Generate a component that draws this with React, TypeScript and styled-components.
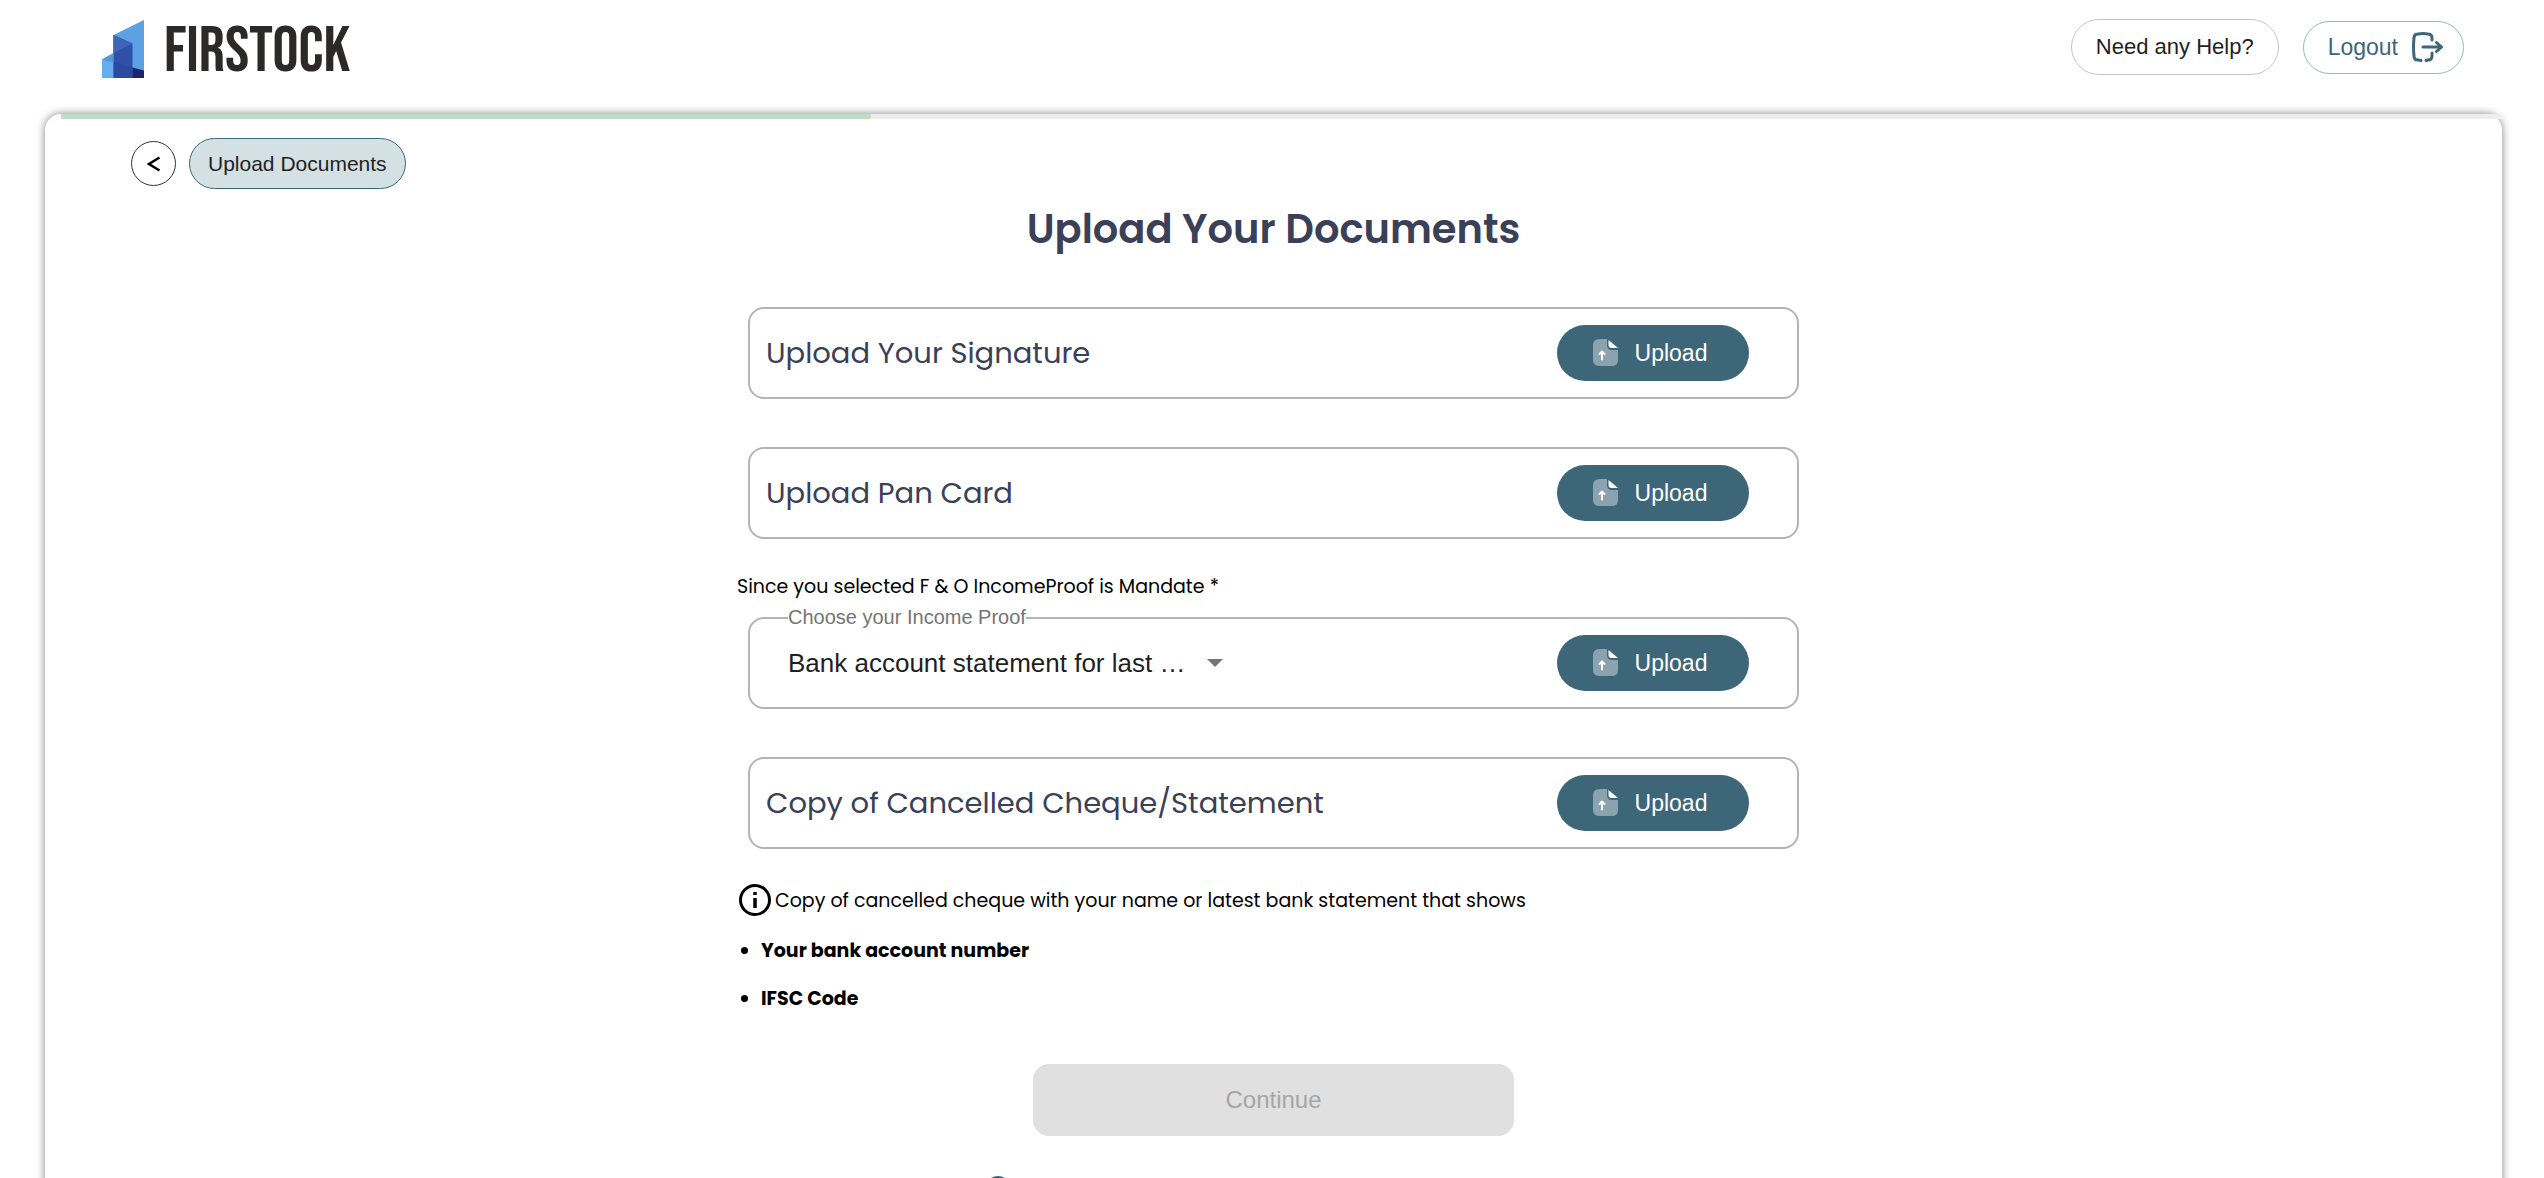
import React, { useState } from "react";
import styled, { createGlobalStyle } from "styled-components";

const UI = `"Liberation Sans", Arial, sans-serif`;
const BODY = `Poppins, Inter, "Open Sans", sans-serif`;
const TEAL = "#3d6678";
const INK = "#3a4058";

const GlobalStyle = createGlobalStyle`
  *, *::before, *::after { box-sizing: border-box; }
  body { margin: 0; background: #ffffff; color: #000000; font-family: ${BODY}; }
  button, select { font-family: ${UI}; cursor: pointer; }
`;

const Page = styled.div`
  height: 100vh;
  overflow-y: auto;
  scrollbar-width: none;
`;

const Header = styled.header`
  display: flex;
  align-items: center;
  justify-content: space-between;
  height: 94px;
  padding: 0 80px 0 100px;
`;

const Brand = styled.a`
  display: flex;
  align-items: center;
  gap: 18px;
  padding-top: 2px;
  color: #2b2a29;
  text-decoration: none;
`;

const BrandName = styled.span`
  padding-top: 8px;
  font-family: "Bebas Neue", "Roboto Condensed", "Liberation Sans Narrow", "Liberation Sans", sans-serif;
  font-size: 65px;
  line-height: 60px;
  font-weight: 400;
`;

const Actions = styled.div`
  display: flex;
  align-items: center;
  gap: 24px;
`;

const HelpButton = styled.button`
  height: 56px;
  padding: 0 24px;
  border: 1px solid #c4c4c4;
  border-radius: 28px;
  background: #ffffff;
  color: #1f1f1f;
  font-size: 22px;
`;

const LogoutButton = styled.button`
  display: flex;
  align-items: center;
  gap: 14px;
  height: 53px;
  padding: 0 19px 0 24px;
  border: 1px solid #9fb3bc;
  border-radius: 27px;
  background: #ffffff;
  color: ${TEAL};
  font-size: 23px;
`;

const Card = styled.main`
  margin: 20px 42px 48px 45px;
  padding-bottom: 48px;
  border-radius: 16px;
  background: #ffffff;
  box-shadow: 0 0 8px rgba(0, 0, 0, 0.5);
`;

const ProgressRow = styled.div`
  display: flex;
  padding-left: 16px;
`;

const Progress = styled.progress`
  display: block;
  flex: 1;
  height: 5px;
  border: 0;
  appearance: none;
  background: #ededed;
  &::-webkit-progress-bar { background: #ededed; border-radius: 2px 0 0 2px; }
  &::-webkit-progress-value { background: #bfdcc5; border-radius: 2px; }
  &::-moz-progress-bar { background: #bfdcc5; border-radius: 2px; }
`;

const Crumbs = styled.nav`
  display: flex;
  align-items: center;
  gap: 13px;
  padding: 19px 86px 0;
`;

const BackButton = styled.button`
  display: grid;
  place-items: center;
  width: 45px;
  height: 45px;
  padding: 0;
  border: 1px solid #333333;
  border-radius: 50%;
  background: #ffffff;
`;

const Crumb = styled.button`
  height: 51px;
  padding: 0 18px;
  border: 1px solid ${TEAL};
  border-radius: 26px;
  background: #d3e0e4;
  color: #1f1f1f;
  font-size: 21px;
`;

const Form = styled.form`
  display: flex;
  flex-direction: column;
  width: 1073px;
  max-width: 100%;
  margin: 0 auto;
`;

const Title = styled.h1`
  margin: 10px 0 48px;
  color: ${INK};
  font-size: 40px;
  line-height: 60px;
  font-weight: 600;
  text-align: center;
`;

const Rows = styled.div`
  display: flex;
  flex-direction: column;
  gap: 48px;
  padding: 0 11px;
`;

const Row = styled.div<{ $indent?: boolean }>`
  position: relative;
  display: flex;
  align-items: center;
  justify-content: space-between;
  height: 92px;
  padding: 0 48px 0 ${(p) => (p.$indent ? 38 : 16)}px;
  border: 2px solid #b4b4b4;
  border-radius: 16px;
`;

const RowName = styled.span`
  color: ${INK};
  font-size: 29px;
  line-height: 42px;
`;

const UploadButton = styled.button`
  display: flex;
  align-items: center;
  justify-content: center;
  gap: 17px;
  width: 192px;
  height: 56px;
  padding: 0 6px 0 0;
  border: 0;
  border-radius: 28px;
  background: ${TEAL};
  color: #ffffff;
  font-size: 23px;
`;

const Mandate = styled.p`
  margin: 33px 0 15px;
  font-size: 19px;
  line-height: 30px;
`;

const FloatingLabel = styled.label`
  position: absolute;
  top: -14px;
  left: 38px;
  background: #ffffff;
  color: #757575;
  font-family: ${UI};
  font-size: 20px;
  line-height: 24px;
`;

const SelectBox = styled.div`
  display: grid;
  align-items: center;
  width: 435px;
  > * { grid-area: 1 / 1; }
  > svg { justify-self: end; pointer-events: none; }
`;

const Select = styled.select`
  width: 100%;
  height: 48px;
  padding: 0 32px 0 0;
  border: 0;
  appearance: none;
  background: transparent;
  color: #1f1f1f;
  font-size: 26px;
  text-overflow: ellipsis;
  white-space: nowrap;
  overflow: hidden;
`;

const Note = styled.p`
  display: flex;
  align-items: center;
  margin: 32px 0 15px;
  font-size: 19px;
  line-height: 40px;
`;

const Points = styled.ul`
  display: flex;
  flex-direction: column;
  gap: 18px;
  margin: 0;
  padding-left: 24px;
  font-size: 19px;
  line-height: 30px;
  font-weight: 700;
`;

const ContinueButton = styled.button`
  align-self: center;
  width: 481px;
  height: 72px;
  margin: 50px 0 40px;
  border: 0;
  border-radius: 16px;
  background: #e0e0e0;
  color: #a6a6a6;
  font-size: 24px;
  cursor: default;
`;

const Support = styled.a`
  display: flex;
  align-items: center;
  padding-left: 248px;
  color: ${TEAL};
  text-decoration: none;
`;

const BrandMark = () => (
  <svg width="46" height="60" viewBox="0 0 46 60" aria-hidden="true">
    <path d="M13.500 17 44 2v58H13.500z" fill="#5ba1e4" />
    <path d="M2 41.500 13.500 35v25H2z" fill="#64aef0" />
    <path d="M2 41.500 13.500 35v9.500z" fill="#5596dc" />
    <path d="M13.500 17 32.500 25.500V60h-19z" fill="#2f50a6" />
    <path d="M13.500 17 32.500 25.500 13.500 35z" fill="#3f66b6" />
    <path d="M13.500 44.500 32.500 49.500V60h-19z" fill="#2c4aa0" />
    <path d="M32.500 49.500 44 52.500V60H32.500z" fill="#1b2470" />
  </svg>
);

const LogoutIcon = () => (
  <svg width="32" height="32" viewBox="0 0 32 32" fill="none" stroke={TEAL} strokeWidth="3" strokeLinecap="round" strokeLinejoin="round" aria-hidden="true">
    <path d="M20 9V7q0-4-4-4-5-1-10 0Q2 3 2 7q-1 9 0 18 0 4 4 4l3 .5M14 29.500l2-.5q4 0 4-4v-3" />
    <path d="M11 16h18M24.500 11.500 29.500 16l-5 4.500" />
  </svg>
);

const FileUpIcon = () => (
  <svg width="25" height="28" viewBox="0 0 25 28" fill="none" aria-hidden="true">
    <path d="M7 0h7v6q0 5 5 5h6v10q0 6-6 6H7q-7 0-7-6V6Q0 0 7 0z" fill="#ffffff" fillOpacity="0.4" />
    <path d="M15.500 1v5q0 3 3 3H25z" fill="#ffffff" />
    <path d="M9 20.500v-7M6.500 15 9 12.500l2.500 2.500" stroke="#ffffff" strokeWidth="2" strokeLinecap="round" strokeLinejoin="round" />
  </svg>
);

const InfoIcon = () => (
  <svg width="38" height="38" viewBox="0 0 38 38" fill="none" aria-hidden="true">
    <circle cx="18" cy="18" r="14.500" stroke="#000000" strokeWidth="3" />
    <path d="M18 16v10M18 10v3" stroke="#000000" strokeWidth="3.500" />
  </svg>
);

const SupportIcon = () => (
  <svg width="26" height="26" viewBox="0 0 26 26" fill="none" aria-hidden="true">
    <circle cx="13" cy="13" r="12" stroke={TEAL} strokeWidth="2" />
    <path d="M13 11v8M13 6v3" stroke={TEAL} strokeWidth="2" />
  </svg>
);

const Upload = ({ what }: { what: string }) => (
  <UploadButton type="button" title={what}>
    <FileUpIcon />
    Upload
  </UploadButton>
);

export default function App() {
  const [proof, setProof] = useState("bank");
  return (
    <>
      <GlobalStyle />
      <Page>
        <Header>
          <Brand href="#">
            <BrandMark />
            <BrandName>FIRSTOCK</BrandName>
          </Brand>
          <Actions>
            <HelpButton type="button">Need any Help?</HelpButton>
            <LogoutButton type="button">
              Logout
              <LogoutIcon />
            </LogoutButton>
          </Actions>
        </Header>
        <Card>
          <ProgressRow>
            <Progress value={33.2} max={100} aria-label="Application progress" />
          </ProgressRow>
          <Crumbs>
            <BackButton type="button" aria-label="Back">
              <svg width="14" height="16" viewBox="0 0 14 16" fill="none" stroke="#000000" strokeWidth="2.500" aria-hidden="true">
                <path d="M12.500 1.500 2 8l10.500 6.500" />
              </svg>
            </BackButton>
            <Crumb type="button">Upload Documents</Crumb>
          </Crumbs>
          <Form onSubmit={(e) => e.preventDefault()}>
            <Title>Upload Your Documents</Title>
            <Rows>
              <Row>
                <RowName>Upload Your Signature</RowName>
                <Upload what="Signature" />
              </Row>
              <Row>
                <RowName>Upload Pan Card</RowName>
                <Upload what="Pan card" />
              </Row>
            </Rows>
            <Mandate>Since you selected F &amp; O IncomeProof is Mandate *</Mandate>
            <Rows>
              <Row $indent>
                <FloatingLabel htmlFor="income-proof">Choose your Income Proof</FloatingLabel>
                <SelectBox>
                  <Select id="income-proof" value={proof} onChange={(e) => setProof(e.target.value)}>
                    <option value="bank">Bank account statement for last 6 months</option>
                  </Select>
                  <svg width="16" height="8" viewBox="0 0 16 8" aria-hidden="true">
                    <path d="M0 0h16L8 8z" fill="#757575" />
                  </svg>
                </SelectBox>
                <Upload what="Income proof" />
              </Row>
              <Row>
                <RowName>Copy of Cancelled Cheque/Statement</RowName>
                <Upload what="Cancelled cheque or statement" />
              </Row>
            </Rows>
            <Note>
              <InfoIcon />
              Copy of cancelled cheque with your name or latest bank statement that shows
            </Note>
            <Points>
              <li>Your bank account number</li>
              <li>IFSC Code</li>
            </Points>
            <ContinueButton type="submit" disabled>
              Continue
            </ContinueButton>
            <Support href="#" aria-label="Support">
              <SupportIcon />
            </Support>
          </Form>
        </Card>
      </Page>
    </>
  );
}
